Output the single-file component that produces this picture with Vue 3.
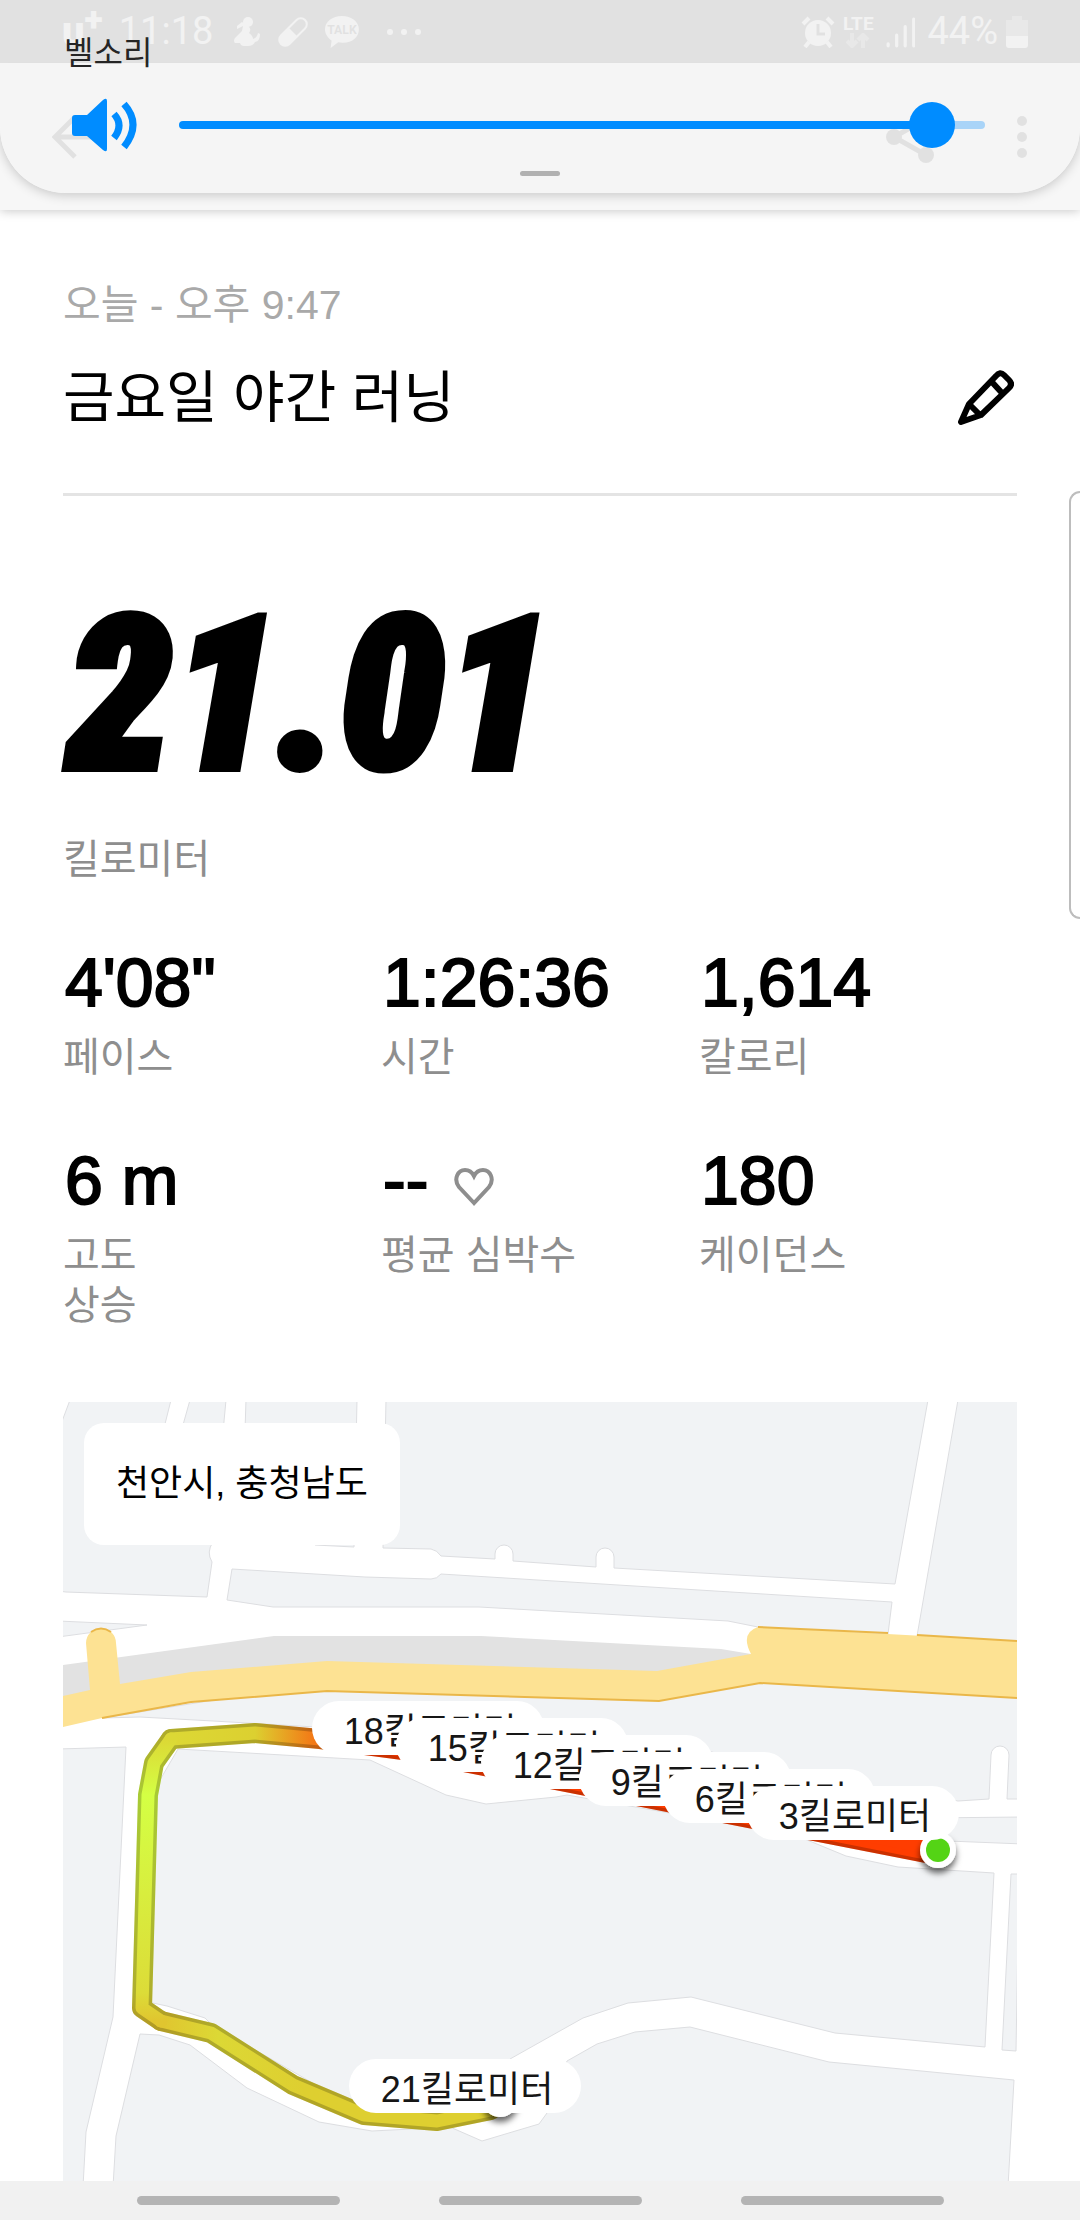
<template>
  <div class="screen">
    <header class="top">
      <div class="status">
        <div class="status-group">
          <span class="carrier">u<sup>+</sup></span>
          <span class="clock">11:18</span>
          <svg class="status-icon person" viewBox="0 0 28 32">
            <circle cx="15" cy="6" r="5" />
            <path d="M4 10 9 6 15 10 Q19 13 16 17 Q20 20 20 23 Q24 22 25 17 L27 18 Q27 25 22 26 Q20 30 15 30 H11 Q8 30 7 27 H2 Q0 25 2 22 L9 15 10 10 4 13Z" />
          </svg>
          <svg class="status-icon pill" viewBox="0 0 32 32">
            <g transform="rotate(45 16 16)">
              <rect x="10" y="-1" width="12" height="34" rx="6" fill="none" stroke="currentColor" stroke-width="2" />
              <path d="M10 16h12v11a6 6 0 0 1-12 0z" />
            </g>
          </svg>
          <svg class="status-icon talk" viewBox="0 0 36 34">
            <path d="M18 0C8 0 0 6 0 14c0 5 3 9 7 12l-1 8 8-6c14 2 22-5 22-14C36 6 28 0 18 0z" />
            <text x="18" y="19" text-anchor="middle">TALK</text>
          </svg>
          <svg class="status-icon more" viewBox="0 0 34 32">
            <circle v-for="x in [3, 17, 31]" :key="x" :cx="x" cy="16" r="3" />
          </svg>
        </div>
        <div class="status-group right">
          <svg class="status-icon alarm" viewBox="0 0 34 32">
            <path d="M2 8 8 2M32 8 26 2M8 26 4 31M26 26l4 5" fill="none" stroke="currentColor" stroke-width="4" />
            <circle cx="17" cy="17" r="13" />
            <path class="hands" d="M17 8v10h7" />
          </svg>
          <span class="lte">
            LTE
            <svg viewBox="0 0 24 15"><path d="M6 0v12M1 8l5 5 5-5M17 15V3M12 7l5-5 5 5" /></svg>
          </span>
          <svg class="status-icon signal" viewBox="0 0 28 30">
            <path d="M2 26v2M10 18v10M18 10v18M26 3v25" fill="none" stroke="currentColor" stroke-width="3" stroke-linecap="round" />
          </svg>
          <span class="battery-text">44%</span>
          <svg class="status-icon battery" viewBox="0 0 22 32">
            <path opacity=".4" d="M6 0h10v4h6v16H0V4h6z" />
            <path d="M0 20h22v9a3 3 0 0 1-3 3H3a3 3 0 0 1-3-3z" />
          </svg>
        </div>
      </div>

      <div class="appbar">
        <button class="icon-btn" aria-label="뒤로">
          <svg class="back" viewBox="0 0 44 44"><path d="M23 2 3 22l20 20M3 22h40" /></svg>
        </button>
        <div class="appbar-actions">
          <button class="icon-btn" aria-label="공유">
            <svg class="share" viewBox="0 0 48 52">
              <path d="M40 8 8 26l32 18" />
              <circle cx="40" cy="8" r="8" /><circle cx="8" cy="26" r="8" /><circle cx="40" cy="44" r="8" />
            </svg>
          </button>
          <button class="icon-btn" aria-label="더보기">
            <svg class="dots" viewBox="0 0 12 44">
              <circle v-for="y in [6, 22, 38]" :key="y" cx="6" :cy="y" r="5" />
            </svg>
          </button>
        </div>
      </div>

      <div class="volume">
        <label for="ring">벨소리</label>
        <div class="volume-row">
          <svg class="speaker" viewBox="0 0 66 54">
            <path d="M3 17h12L31 2q4-3 4 1v48q0 4-4 1L15 38H3q-3 0-3-3V20q0-3 3-3z" />
            <path class="wave" d="M42 16q10 11 0 24M52 6q18 20 0 43" />
          </svg>
          <input id="ring" v-model="volume" type="range" min="0" max="100" :style="{ '--fill': volume + '%' }" />
        </div>
        <div class="grip"></div>
      </div>
    </header>

    <main>
      <section class="heading">
        <p class="date">오늘 - 오후 9:47</p>
        <div class="title-row">
          <h1>금요일 야간 러닝</h1>
          <button class="icon-btn" aria-label="편집">
            <svg class="pencil" viewBox="0 0 56 56">
              <path d="M3 52 11 34 38 6Q42 1 46 5L51 10Q55 14 51 18L23 45ZM11 34 22 45M33 11 44 23" />
            </svg>
          </button>
        </div>
      </section>

      <p class="distance">21.01</p>
      <p class="label">킬로미터</p>

      <dl class="stats">
        <div v-for="s in stats" :key="s.label">
          <dd>
            {{ s.value }}
            <svg v-if="s.heart" class="heart" viewBox="0 0 40 38">
              <path d="M20 35 5 19C-1 11 4 2 11 2q6 0 9 6 3-6 9-6c7 0 12 9 6 17z" />
            </svg>
          </dd>
          <dt class="label">{{ s.label }}</dt>
        </div>
      </dl>

      <section class="map">
        <svg viewBox="0 0 954 779">
          <defs>
            <linearGradient id="low" gradientUnits="userSpaceOnUse" x1="98" y1="0" x2="240" y2="0">
              <stop offset="0" stop-color="#e0c52f" />
              <stop offset=".4" stop-color="#dcd835" />
              <stop offset="1" stop-color="#decf30" />
            </linearGradient>
            <linearGradient id="side" gradientUnits="userSpaceOnUse" x1="0" y1="337" x2="0" y2="619">
              <stop offset="0" stop-color="#dcd835" />
              <stop offset=".2" stop-color="#d4ff44" />
              <stop offset=".9" stop-color="#dcdc38" />
              <stop offset="1" stop-color="#e0c52f" />
            </linearGradient>
            <linearGradient id="high" gradientUnits="userSpaceOnUse" x1="108" y1="0" x2="308" y2="0">
              <stop offset="0" stop-color="#dcd835" />
              <stop offset=".42" stop-color="#dcd030" />
              <stop offset=".7" stop-color="#f27c17" />
              <stop offset="1" stop-color="#ff3d00" />
            </linearGradient>
            <filter id="shadow" x="-50%" y="-50%" width="200%" height="200%">
              <feDropShadow dx="0" dy="5" stdDeviation="3" flood-opacity=".6" />
            </filter>
          </defs>

          <path v-for="d in blocks" :key="d" class="block" :d="d" />
          <path fill="#e2e2e2" d="M0 263 211 234H418L658 247 700 254V270H594L264 262 0 300Z" />
          <path class="highway" d="M0 294 27 288 23 241A15 15 0 0 1 53 241L57 282 128 270 264 259 594 269 688 252Q677 231 695 225L954 239V296L697 281 596 299 264 289 128 300 39 316 0 325Z" />
          <path class="curb" d="M695 225 825 231M854 233 954 239M954 296 697 281 596 299 264 289 128 300 39 316M28 230Q38 223 48 230" />

          <g class="route edge">
            <path v-for="r in route" :key="r.d" :d="r.d" :stroke="r.color" />
          </g>
          <g class="route dim">
            <path v-for="r in route" :key="r.d" :d="r.d" />
          </g>
          <g class="route core">
            <path v-for="r in route" :key="r.d" :d="r.d" :stroke="r.color" />
          </g>

          <circle cx="437" cy="697" r="18" fill="#fff" filter="url(#shadow)" />
          <g filter="url(#shadow)">
            <circle cx="875" cy="448" r="18" fill="#fff" />
          </g>
          <circle cx="875" cy="448" r="12" fill="#54d415" />

          <g v-for="m in markers" :key="m.km">
            <rect :x="m.x" :y="m.y" :width="m.w" height="54" rx="27" fill="#fff" />
            <text class="marker" :x="m.x + m.w / 2 + 2" :y="m.y + 43">{{ m.km }}킬로미터</text>
          </g>
        </svg>
        <span class="city">천안시, 충청남도</span>
      </section>
    </main>

    <nav>
      <button v-for="n in ['최근', '홈', '뒤로']" :key="n" :aria-label="n"></button>
    </nav>
    <div class="edge-handle"></div>
  </div>
</template>

<script setup>
import { ref } from "vue";

const volume = ref(96);

const stats = [
  { value: "4'08\"", label: "페이스" },
  { value: "1:26:36", label: "시간" },
  { value: "1,614", label: "칼로리" },
  { value: "6 m", label: "고도\n상승" },
  { value: "--", label: "평균 심박수", heart: true },
  { value: "180", label: "케이던스" },
];

// city blocks, the roads are the gaps between them
const blocks = [
  "M-5 30 7-2H108L100 30 150 140Q143 150 149 160L144 195 3 190-5 189Z",
  "M127-2H163L160 30H118Z",
  "M183-2H294L291 145 252 143 181 60Z",
  "M323-2H865L832 182 551 166V155A9 9 0 0 0 533 155V165L450 159V152A9 9 0 0 0 432 152V157L378 154Q374 148 368 147L320 146Z",
  "M169 167 302 175 368 177Q374 177 378 172L829 200 825 232 695 225 665 219 416 205H210L164 198Z",
  "M895-2H960V240L854 234Z",
  "M-5 219 84 223-5 235Z",
  "M39 316 77 315 150 319 252 325 649 350 700 366 895 399 926 397 928 353A9 9 0 0 1 946 353L944 397H960V290L697 275 264 280Z",
  "M860 416 960 415V442L860 438Z",
  "M948 472H956L953 649 939 648Z",
  "M-5 347 63 345 50 615 23 730 20 785H-5Z",
  "M115 347 307 358 383 393 423 402 493 395 504 393 732 433 783 454 835 465 931 471 922 645 772 631 628 595 565 601 520 616 447 657 420 690 300 710 149 623 142 616 104 604 85 600 90 390Z",
  "M77 632 96 633 127 643 184 686 256 720 309 729 387 725 419 739 476 722 484 711 504 659 534 642 572 630 627 625 766 660 951 678 945 785H50L53 734Z",
];

const route = [
  { d: "M108 337 192 331 257 337 340 348 868 452", color: "url(#high)" },
  { d: "M560 385 868 446", color: "#ff3d00" },
  { d: "M428 708 374 719 301 713 230 683 148 631 98 619", color: "url(#low)" },
  { d: "M98 619 79 606 85 393 91 361 108 337", color: "url(#side)" },
];

const markers = [
  { km: 21, x: 286, y: 657, w: 232 },
  { km: 18, x: 249, y: 299, w: 232 },
  { km: 15, x: 333, y: 316, w: 232 },
  { km: 12, x: 418, y: 333, w: 232 },
  { km: 9, x: 516, y: 350, w: 212 },
  { km: 6, x: 600, y: 367, w: 212 },
  { km: 3, x: 684, y: 384, w: 212 },
];
</script>

<style>
body {
  background: #fff;
}
</style>

<style scoped>
* {
  margin: 0;
  padding: 0;
  box-sizing: border-box;
}

.screen {
  position: relative;
  min-height: 100vh;
  display: flex;
  flex-direction: column;
  overflow: hidden;
  font-family: "Liberation Sans", "Noto Sans CJK KR", sans-serif;
  color: #000;
}

svg {
  display: block;
}

button {
  border: none;
  background: none;
  cursor: pointer;
}

.top {
  position: relative;
}

.status {
  height: 63px;
  padding: 0 52px 0 62px;
  display: flex;
  justify-content: space-between;
  align-items: center;
  background: #575757;
  color: #dcdcdc;
  font-family: Roboto, sans-serif;
  font-size: 38px;
  line-height: 63px;
}

.status-group {
  display: flex;
  align-items: center;
  gap: 16px;
}

.status-group.right {
  gap: 8px;
}

.status-icon {
  height: 32px;
  fill: currentColor;
}

.carrier {
  font-weight: 900;
  font-size: 40px;
  line-height: 63px;
}

.carrier sup {
  font-size: 34px;
  line-height: 0;
}

.clock {
  margin-right: 4px;
}

.talk {
  margin-right: 12px;
}

.talk text {
  font-size: 13px;
  font-weight: 700;
  fill: #575757;
}

.hands {
  fill: none;
  stroke: #575757;
  stroke-width: 3;
}

.lte {
  font-size: 19px;
  font-weight: 700;
  line-height: 18px;
}

.lte svg {
  width: 24px;
  margin: 0 auto;
  opacity: 0.4;
  fill: none;
  stroke: currentColor;
  stroke-width: 4;
}

.signal {
  margin: 0 4px;
}

.appbar {
  height: 147px;
  padding: 0 52px;
  display: flex;
  align-items: center;
  justify-content: space-between;
  background: #f7f7f7;
  box-shadow: 0 1px 10px rgba(0, 0, 0, 0.22);
}

.appbar-actions {
  display: flex;
  align-items: center;
  gap: 82px;
}

.back {
  width: 44px;
  fill: none;
  stroke: #575757;
  stroke-width: 5;
}

.share {
  width: 48px;
  fill: #575757;
}

.share path {
  fill: none;
  stroke: #575757;
  stroke-width: 5;
}

.dots {
  width: 12px;
  fill: #575757;
}

.volume {
  position: absolute;
  top: 0;
  left: 0;
  right: 0;
  height: 193px;
  padding: 28px 95px 17px 64px;
  display: flex;
  flex-direction: column;
  background: rgba(245, 245, 245, 0.88);
  border-radius: 0 0 66px 66px;
  box-shadow: 0 2px 12px rgba(0, 0, 0, 0.2);
}

.volume label {
  font-size: 32px;
  line-height: 50px;
  color: #252525;
}

.volume-row {
  display: flex;
  align-items: center;
  gap: 41px;
  padding: 20px 0 20px 8px;
}

.speaker {
  width: 66px;
  height: 54px;
  fill: #008cff;
}

.speaker .wave {
  fill: none;
  stroke: #008cff;
  stroke-width: 7;
}

input[type="range"] {
  flex: 1;
  min-width: 0;
  height: 46px;
  appearance: none;
  background: none;
}

input[type="range"]::-webkit-slider-runnable-track {
  height: 8px;
  border-radius: 4px;
  background: linear-gradient(to right, #008cff var(--fill), #a9d4f8 var(--fill));
}

input[type="range"]::-webkit-slider-thumb {
  appearance: none;
  width: 46px;
  height: 46px;
  margin-top: -19px;
  border-radius: 50%;
  background: #008cff;
}

.grip {
  position: absolute;
  left: 50%;
  bottom: 17px;
  width: 40px;
  height: 5px;
  margin-left: -20px;
  border-radius: 3px;
  background: #b1b1b1;
}

main {
  padding: 0 63px;
  flex: 1;
}

.heading {
  padding: 71px 0 63px;
  border-bottom: 3px solid #e4e4e4;
}

.date {
  font-size: 41px;
  line-height: 48px;
  color: #a9a9a9;
}

.title-row {
  margin-top: 37px;
  display: flex;
  justify-content: space-between;
  align-items: center;
}

h1 {
  font-size: 56px;
  font-weight: 400;
  line-height: 64px;
}

.pencil {
  width: 56px;
  margin-right: 3px;
  fill: none;
  stroke: #000;
  stroke-width: 6;
  stroke-linejoin: round;
}

.distance {
  margin: 120px 0 58px;
  padding-left: 4px;
  font-family: "Roboto Condensed", "Open Sans Condensed", "Noto Sans Condensed", Roboto, sans-serif;
  font-size: 212px;
  font-weight: 900;
  font-style: italic;
  line-height: 160px;
  -webkit-text-stroke: 8px #000;
}

.label {
  font-size: 40px;
  line-height: 50px;
  color: #8e8e8e;
  white-space: pre-line;
}

.stats {
  margin-top: 62px;
  display: grid;
  grid-template-columns: repeat(3, 1fr);
  row-gap: 62px;
}

.stats > div {
  display: flex;
  flex-direction: column;
  gap: 14px;
}

dd {
  padding-left: 2px;
  display: flex;
  align-items: center;
  gap: 26px;
  font-size: 68px;
  line-height: 72px;
  -webkit-text-stroke: 2px #000;
}

.heart {
  width: 40px;
  margin-top: 14px;
  fill: none;
  stroke: #8e8e8e;
  stroke-width: 4;
}

.map {
  position: relative;
  margin-top: 72px;
}

.map > svg {
  width: 100%;
  background: #fff;
}

.block {
  fill: #f1f3f5;
  stroke: #dddee1;
  stroke-width: 1;
}

.highway {
  fill: #fde293;
}

.curb {
  fill: none;
  stroke: #eab749;
  stroke-width: 2;
}

.route {
  fill: none;
  stroke-linecap: round;
  stroke-linejoin: round;
  stroke-width: 20;
}

.route.dim {
  stroke: #000;
  opacity: 0.2;
}

.route.core {
  stroke-width: 13;
}

.marker {
  font-size: 36px;
  text-anchor: middle;
  fill: #161616;
}

.city {
  position: absolute;
  top: 21px;
  left: 21px;
  padding: 0 32px;
  border-radius: 20px;
  background: #fff;
  font-size: 36px;
  line-height: 122px;
}

nav {
  height: 39px;
  display: flex;
  align-items: center;
  justify-content: center;
  gap: 99px;
  background: #f1f1f1;
}

nav button {
  width: 203px;
  height: 9px;
  border-radius: 5px;
  background: #b4b4b4;
}

.edge-handle {
  position: absolute;
  top: 491px;
  right: 0;
  width: 11px;
  height: 428px;
  border: 2px solid #bdbdbd;
  border-right: none;
  border-radius: 14px 0 0 14px;
  background: #fff;
}
</style>
